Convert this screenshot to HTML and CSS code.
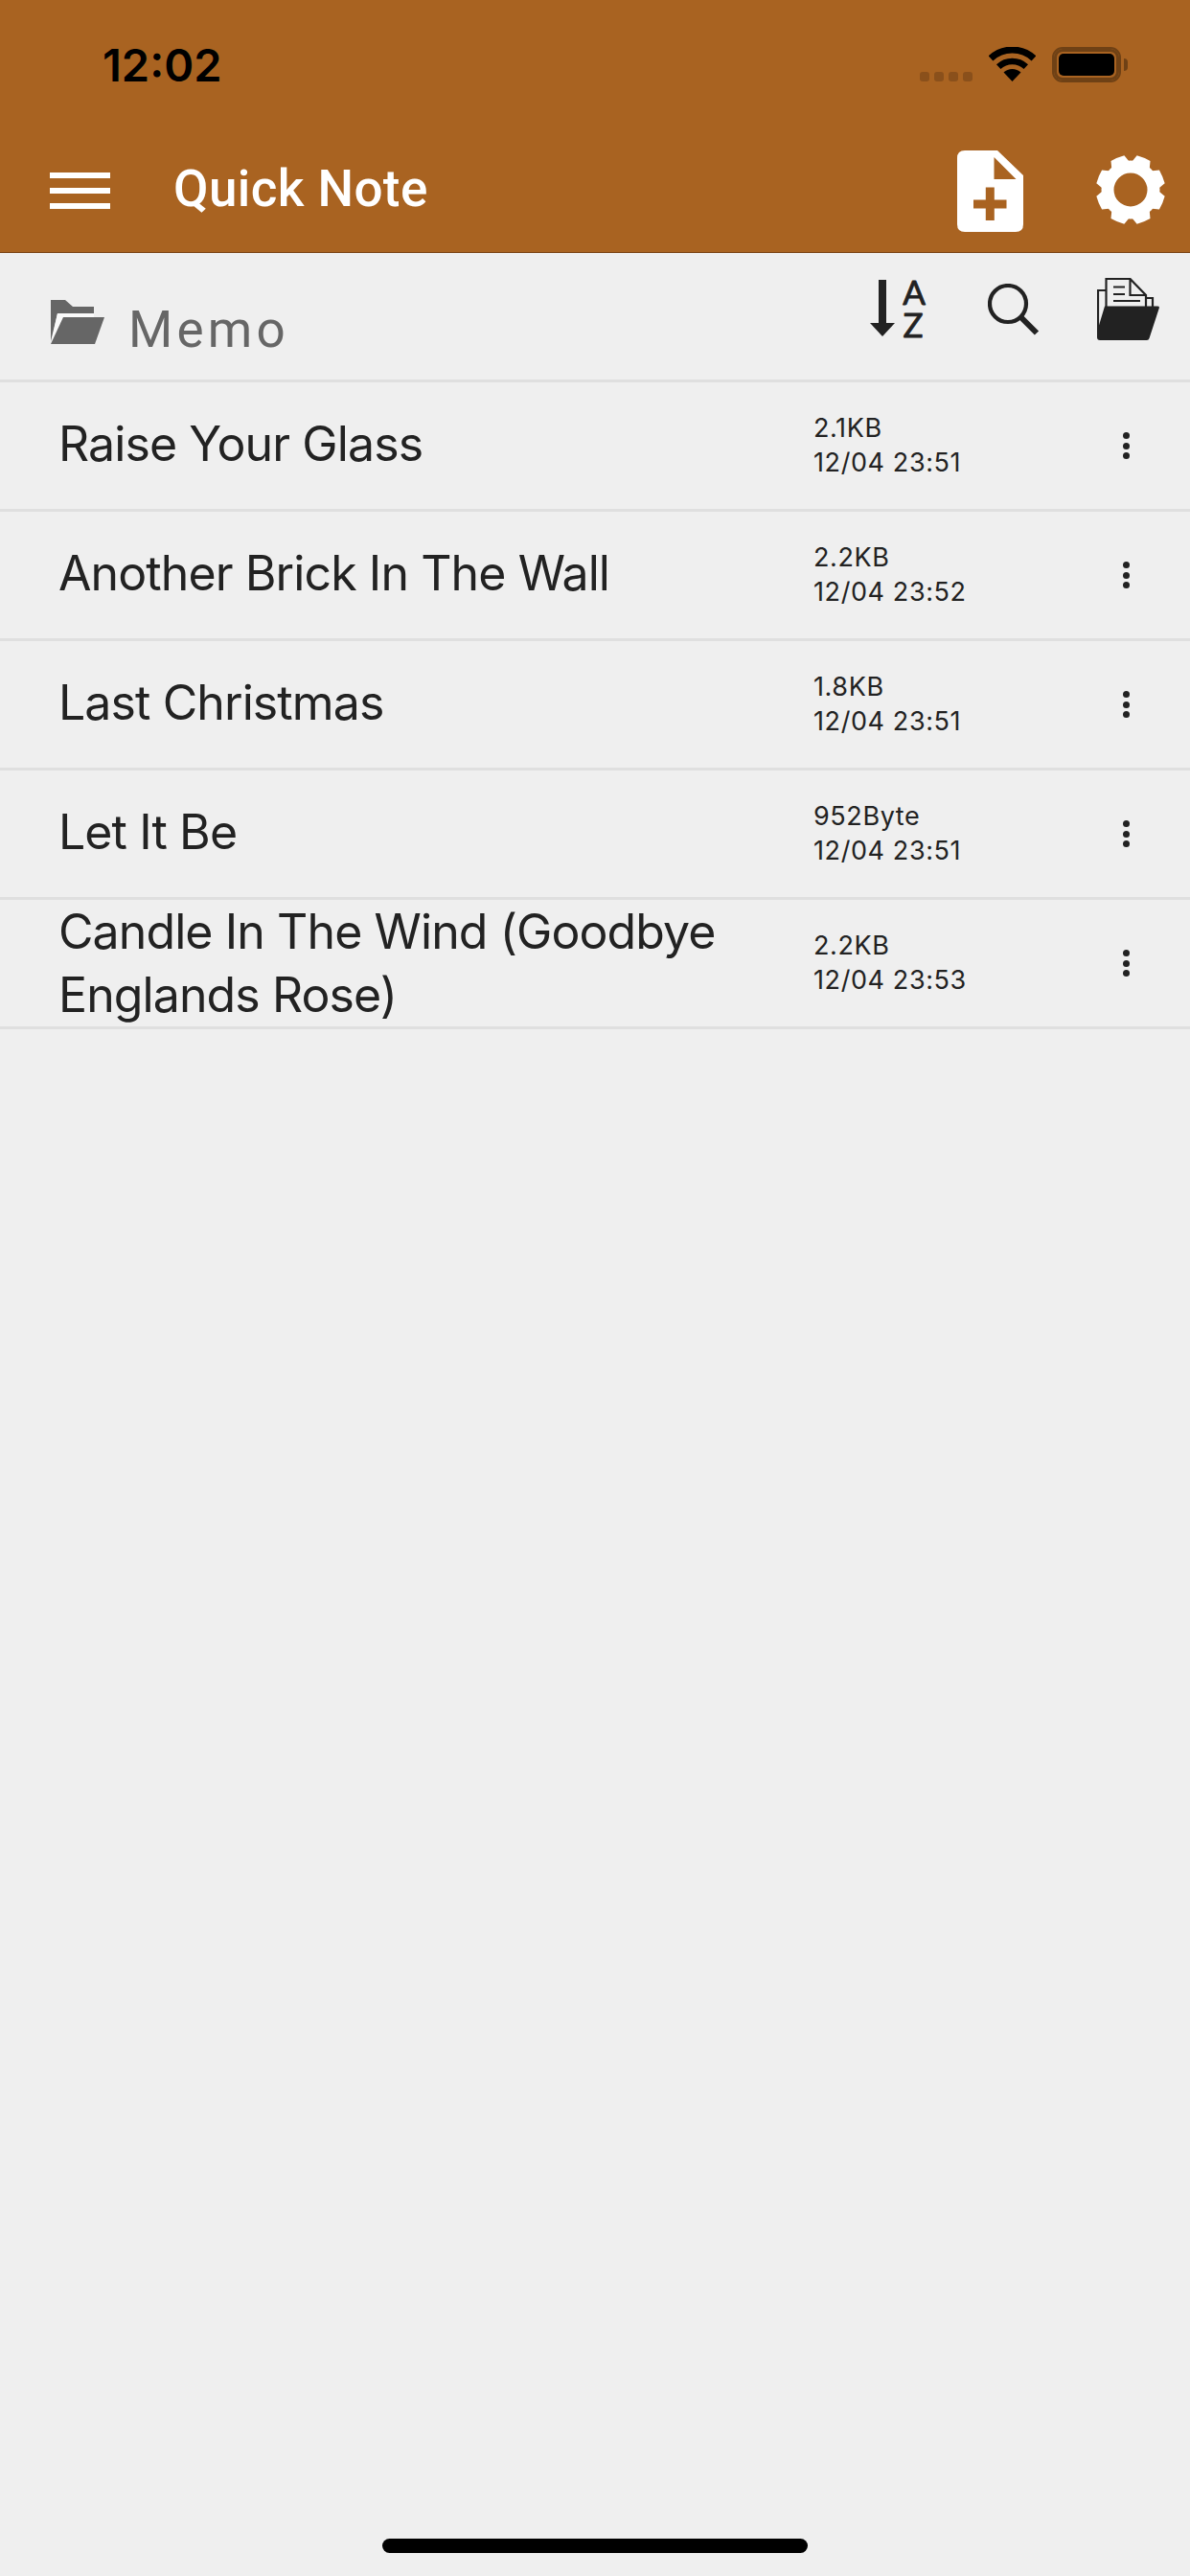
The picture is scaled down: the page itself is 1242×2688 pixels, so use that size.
FILE: index.html
```html
<!DOCTYPE html>
<html lang="en">
<head>
    <meta charset="UTF-8">
    <meta name="viewport" content="width=device-width, initial-scale=1.0">
    <title>Quick Note</title>
    <link rel="stylesheet" href="styles.css">
</head>
<body>
<header class="app-header">
  <div class="status-bar">
    <span class="clock">12:02</span>
    <div class="status-right">
      <div class="signal"><i></i><i></i><i></i><i></i></div>
      <svg class="wifi" width="49" height="36" viewBox="0 0 49 36">
        <path d="M2 11.9A33 33 0 0 1 47 11.9" fill="none" stroke="#000" stroke-width="7"/>
        <path d="M10.2 20.6A21 21 0 0 1 38.8 20.6" fill="none" stroke="#000" stroke-width="6.5"/>
        <path d="M24.5 36L15.5 26.5A13 13 0 0 1 33.5 26.5Z"/>
      </svg>
      <div class="battery"><div class="battery-level"></div></div>
      <div class="battery-tip"></div>
    </div>
  </div>
  <nav class="navbar">
    <div class="menu-btn"><i></i><i></i><i></i></div>
    <span class="app-title">Quick Note</span>
    <svg class="new-file" width="69" height="85" viewBox="0 0 69 85">
      <path d="M8 0H42L69 26V77Q69 85 61 85H8Q0 85 0 77V8Q0 0 8 0Z" fill="#fff"/>
      <path d="M38.5 7V30H61.5Z" fill="#a96321"/>
      <path d="M17 56H51.500M34.300 38.500V73" fill="none" stroke="#a96321" stroke-width="9"/>
    </svg>
    <svg class="settings" width="72" height="72" viewBox="-36 -36 72 72">
      <circle r="24" fill="none" stroke="#fff" stroke-width="13"/>
      <g fill="#fff">
        <path id="tooth" d="M24 -11L35.500 -7.500Q36.500 0 35.500 7.500L24 11Z" transform="rotate(22.500)"/>
        <use href="#tooth" transform="rotate(45)"/>
        <use href="#tooth" transform="rotate(90)"/>
        <use href="#tooth" transform="rotate(135)"/>
        <use href="#tooth" transform="rotate(180)"/>
        <use href="#tooth" transform="rotate(225)"/>
        <use href="#tooth" transform="rotate(270)"/>
        <use href="#tooth" transform="rotate(315)"/>
      </g>
    </svg>
  </nav>
</header>

<section class="toolbar">
  <div class="folder-name">
    <svg class="folder-open" width="56" height="46" viewBox="0 0 56 46">
      <path d="M0 0H15L23 7H45V14H7L0 43Z" fill="#666"/>
      <path d="M7 14H45V18H13L0.500 44Z" fill="#fafafa"/>
      <path d="M13 18H56L46 46H0Z" fill="#666"/>
    </svg>
    <span class="folder-label">Memo</span>
  </div>
  <div class="tools">
    <svg class="sort-icon" width="60" height="82" viewBox="0 -10 60 82">
      <path d="M13 0V48" stroke="#222" stroke-width="8"/>
      <path d="M0 45H26L13 59Z" fill="#222"/>
      <text x="46" y="26" text-anchor="middle" class="sort-letter">A</text>
      <text x="45" y="60" text-anchor="middle" class="sort-letter">Z</text>
    </svg>
    <svg class="search-icon" width="54" height="54" viewBox="0 0 54 54">
      <circle cx="21" cy="21" r="19" fill="none" stroke="#222" stroke-width="4.200"/>
      <path d="M33.500 34L51 51.500" stroke="#222" stroke-width="6"/>
    </svg>
    <svg class="files-icon" width="65" height="65" viewBox="0 0 65 65">
      <path d="M1 58V13H9M9.500 32V1H34.500L51 18V32M34.500 1V18H51M52 21H58V30" fill="none" stroke="#222" stroke-width="2.200"/>
      <path d="M17 9.500H29M17 17H29M17 24H45" stroke="#222" stroke-width="2"/>
      <path d="M0 56L8 29.500H63Q65.500 29.500 64.800 31.500L54.500 63Q54 65 52 65H3Q0 65 0 62Z" fill="#222"/>
    </svg>
  </div>
</section>

<main class="note-list">
  <div class="note-row">
    <div class="note-title">Raise Your Glass</div>
    <div class="note-meta">2.1KB<br>12/04 23:51</div>
    <div class="kebab"><i></i><i></i><i></i></div>
  </div>
  <div class="note-row">
    <div class="note-title">Another Brick In The Wall</div>
    <div class="note-meta">2.2KB<br>12/04 23:52</div>
    <div class="kebab"><i></i><i></i><i></i></div>
  </div>
  <div class="note-row">
    <div class="note-title">Last Christmas</div>
    <div class="note-meta">1.8KB<br>12/04 23:51</div>
    <div class="kebab"><i></i><i></i><i></i></div>
  </div>
  <div class="note-row">
    <div class="note-title">Let It Be</div>
    <div class="note-meta">952Byte<br>12/04 23:51</div>
    <div class="kebab"><i></i><i></i><i></i></div>
  </div>
  <div class="note-row">
    <div class="note-title note-title-long">Candle In The Wind (Goodbye Englands Rose)</div>
    <div class="note-meta">2.2KB<br>12/04 23:53</div>
    <div class="kebab"><i></i><i></i><i></i></div>
  </div>
</main>

<div class="home-indicator"></div>
</body>
</html>
```

FILE: styles.css
```css
body {
    margin: 0;
    min-height: 2688px;
    display: flex;
    flex-direction: column;
    background: #efefef;
    color: #222;
    font-family: Roboto, Arial, sans-serif;
}
.app-header {
    background: #a96321;
    border-bottom: 1px solid #7a4415;
}
.status-bar {
    height: 130px;
    display: flex;
    justify-content: space-between;
    align-items: flex-start;
    box-sizing: border-box;
    padding: 49px 65px 0 107px;
}
.clock {
    font-family: Inter, Roboto, sans-serif;
    font-size: 47px;
    font-weight: 600;
    line-height: 38px;
    color: #000;
}
.status-right {
    display: flex;
    align-items: flex-start;
}
.signal {
    display: flex;
    gap: 5px;
    margin: 26px 17px 0 0;
}
.signal i {
    width: 10px;
    height: 10px;
    border-radius: 3px;
    background: #8a501b;
}
.wifi {
    margin-right: 17px;
}
.battery {
    width: 72px;
    height: 37px;
    box-sizing: border-box;
    padding: 5px;
    border: 2px solid #6f4115;
    border-radius: 11px;
    background: #a96321;
    box-shadow: inset 0 0 0 3px #6f4115;
}
.battery-level {
    height: 100%;
    background: #000;
    border-radius: 5px;
}
.battery-tip {
    width: 4px;
    height: 13px;
    margin: 12px 0 0 3px;
    background: #6f4115;
    border-radius: 0 6px 6px 0;
}
.navbar {
    height: 133px;
    display: flex;
    align-items: center;
    padding: 0 26px 0 52px;
}
.menu-btn {
    width: 63px;
    display: flex;
    flex-direction: column;
    gap: 10px;
    margin-top: 5px;
}
.menu-btn i {
    height: 6px;
    background: #fff;
}
.app-title {
    flex: 1;
    margin-left: 66px;
    color: #fff;
    font-size: 53px;
    font-weight: 500;
    letter-spacing: 0.4px;
}
.new-file {
    margin: 5px 76px 0 0;
}
.settings {
    margin-top: 3px;
}
.toolbar {
    height: 132px;
    display: flex;
    justify-content: space-between;
    align-items: flex-start;
    border-bottom: 3px solid #dfdfdf;
}
.folder-name {
    display: flex;
    align-items: flex-start;
    padding: 49px 0 0 53px;
}
.folder-label {
    margin-left: 25px;
    color: #666;
    font-size: 53px;
    line-height: 62px;
    letter-spacing: 4.2px;
}
.tools {
    display: flex;
    align-items: flex-start;
    padding: 26px 32px 0 0;
}
.sort-letter {
    font-family: Lato, sans-serif;
    font-size: 35px;
    fill: #222;
    stroke: #222;
    stroke-width: 0.8px;
    stroke-linejoin: round;
}
.sort-icon {
    margin: -8px 63px 0 0;
}
.search-icon {
    margin: 6px 60px 0 0;
}
.note-row {
    height: 132px;
    display: flex;
    align-items: center;
    border-bottom: 3px solid #dfdfdf;
}
.note-title {
    width: 849px;
    box-sizing: border-box;
    padding: 0 30px 5px 61px;
    font-family: Inter, Roboto, sans-serif;
    font-size: 50px;
    letter-spacing: -0.9px;
    line-height: 66px;
}
.note-title-long {
    padding-bottom: 0;
}
.note-meta {
    flex: 1;
    font-family: Inter, Roboto, sans-serif;
    font-size: 27px;
    line-height: 36px;
    letter-spacing: 0.6px;
}
.kebab {
    display: flex;
    flex-direction: column;
    gap: 3.500px;
    margin-right: 63px;
}
.kebab i {
    width: 7px;
    height: 7px;
    border-radius: 50%;
    background: #222;
}
.note-list {
    flex: 1;
}
.home-indicator {
    align-self: center;
    width: 444px;
    height: 15px;
    margin-bottom: 24px;
    border-radius: 8px;
    background: #000;
}
```
